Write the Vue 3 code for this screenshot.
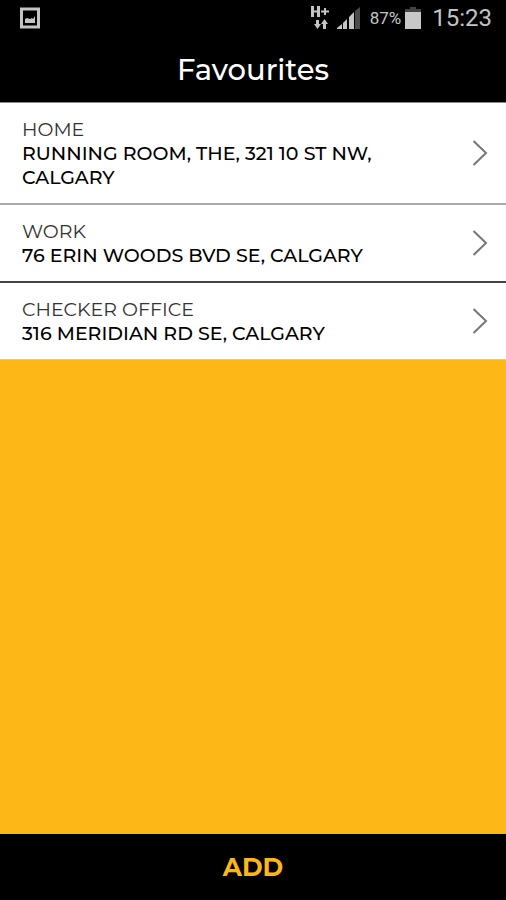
<script setup>
import { ref } from 'vue';

const favourites = ref([
  { id: 1, name: 'HOME', address: 'RUNNING ROOM, THE, 321 10 ST NW, CALGARY' },
  { id: 2, name: 'WORK', address: '76 ERIN WOODS BVD SE, CALGARY' },
  { id: 3, name: 'CHECKER OFFICE', address: '316 MERIDIAN RD SE, CALGARY' }
]);
</script>

<template>
  <div class="screen">
    <div class="status">
      <svg class="picture" width="20" height="22" viewBox="0 0 20 22" aria-hidden="true">
        <rect x="1.5" y="2" width="17" height="18" fill="none" stroke="#c4c4c4" stroke-width="3" />
        <path d="M5 16v-4l2-1 3 1 2-1 1 1 2-3v7z" fill="#c4c4c4" />
      </svg>
      <svg class="network" width="18" height="26" viewBox="0 0 18 26" aria-hidden="true">
        <g fill="none" stroke="#c4c4c4">
          <path d="M1.500 1v11M7.500 1v11" stroke-width="3" />
          <path d="M2 6.500h6M10 6.500h8M14 3v7" stroke-width="2" />
          <path d="M6.500 15v6M13.500 24v-6" stroke-width="3" />
        </g>
        <path d="M3 19h7l-3.500 5zM10 19h7l-3.500-5z" fill="#c4c4c4" />
      </svg>
      <svg class="signal" width="24" height="22" viewBox="0 0 24 22" aria-hidden="true">
        <path d="M0 22v-1l5-4v5zM6 22v-6l4-4v10zM12 22V10l5-5v17z" fill="#c4c4c4" />
        <path d="M18 22V4l5-4v22z" fill="#4c4c4c" />
      </svg>
      <span class="percent">87%</span>
      <svg class="battery" width="16" height="22" viewBox="0 0 16 22" aria-hidden="true">
        <path d="M5 0h6v2h5v3H0V2h5z" fill="#444" />
        <path d="M0 5h16v17H0z" fill="#c8c8c8" />
      </svg>
      <span class="time">15:23</span>
    </div>
    <header class="header">
      <h1 class="title">Favourites</h1>
    </header>
    <ul class="list">
      <li v-for="item in favourites" :key="item.id" class="item">
        <button type="button" class="row">
          <span class="text">
            <span class="name">{{ item.name }}</span>
            <span class="address">{{ item.address }}</span>
          </span>
          <svg class="chevron" width="16" height="26" viewBox="0 0 16 26" aria-hidden="true">
            <path d="M1.500 1l12.500 12L1.500 25" fill="none" stroke="#777" stroke-width="2" />
          </svg>
        </button>
      </li>
    </ul>
    <button type="button" class="add">ADD</button>
  </div>
</template>

<style>
body {
  margin: 0;
}
</style>

<style scoped>
.screen {
  display: flex;
  flex-direction: column;
  min-height: 100vh;
  background-color: #fdb817;
  font-family: Montserrat, Inter, sans-serif;
}

.status {
  display: flex;
  align-items: center;
  height: 36px;
  padding: 0 14px 0 20px;
  background-color: #000;
  color: #c4c4c4;
  font-family: Roboto, sans-serif;
}

.network {
  margin-left: auto;
}

.signal {
  margin: 0 9px 0 8px;
}

.percent {
  font-size: 17px;
}

.battery {
  margin: 0 11px 0 4px;
}

.time {
  font-size: 24px;
}

.header {
  display: flex;
  justify-content: center;
  padding: 14px 20px 12px;
  border-bottom: 1px solid #888;
  background-color: #000;
}

.title {
  margin: 0;
  color: #fff;
  font-size: 29px;
  font-weight: 500;
  line-height: 40px;
}

.list {
  margin: 0;
  padding: 0;
  list-style: none;
}

.item {
  border-bottom: 1px solid #d8c9a0;
}

.item:first-child {
  border-bottom: 2px solid #aaa;
}

.item:nth-child(2) {
  border-bottom: 2px solid #444;
}

.row {
  display: flex;
  align-items: center;
  gap: 60px;
  width: 100%;
  padding: 0 18px 0 22px;
  border: none;
  background-color: #fff;
  color: #000;
  font-family: inherit;
  font-size: 19px;
  line-height: 24px;
  text-align: left;
  cursor: pointer;
}

.text {
  flex: 1;
  padding: 15px 0 13px;
}

.name {
  display: block;
  color: #333;
}

.address {
  display: block;
  font-weight: 500;
}

.chevron {
  flex: none;
}

.add {
  margin-top: auto;
  padding: 16px;
  border: none;
  background-color: #000;
  color: #fdb817;
  font-family: inherit;
  font-size: 25px;
  font-weight: 700;
  line-height: 34px;
  cursor: pointer;
}
</style>
